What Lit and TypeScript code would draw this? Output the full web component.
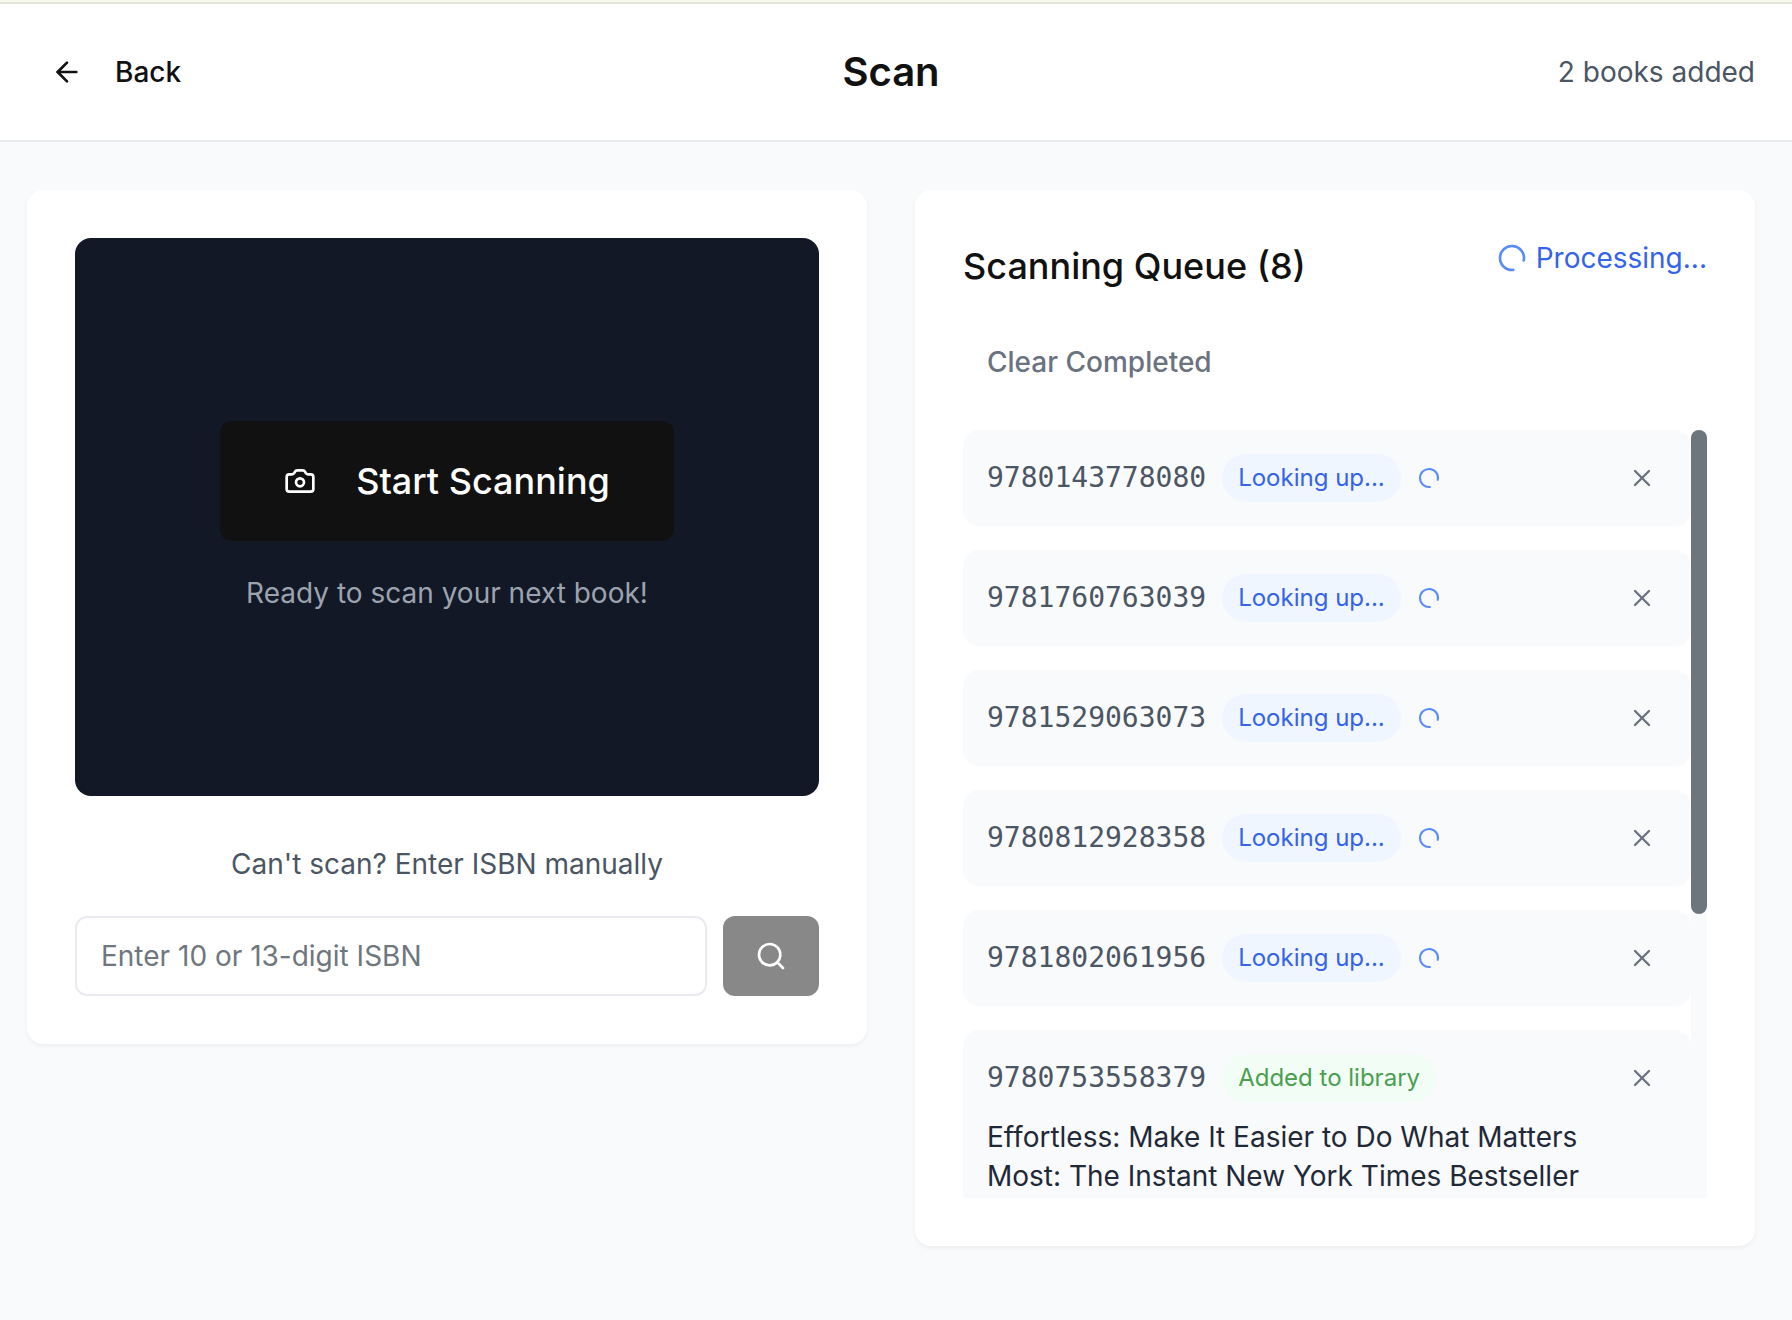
import { LitElement, html, css, svg, nothing } from "lit";
import { customElement, property, query, state } from "lit/decorators.js";
import { styleMap } from "lit/directives/style-map.js";

type Status = "looking" | "added" | "unloaded";

interface QueueItem {
  isbn: string;
  status: Status;
  title?: string;
}

const LABELS: Record<Status, string> = {
  looking: "Looking up...",
  added: "Added to library",
  unloaded: "",
};

const ICONS = {
  back: svg`<path d="m12 19-7-7 7-7"/><path d="M19 12H5"/>`,
  camera: svg`<path d="M13.997 4a2 2 0 0 1 1.76 1.05l.486.9A2 2 0 0 0 18.003 7H20a2 2 0 0 1 2 2v9a2 2 0 0 1-2 2H4a2 2 0 0 1-2-2V9a2 2 0 0 1 2-2h1.997a2 2 0 0 0 1.759-1.048l.489-.904A2 2 0 0 1 10.004 4z"/><circle cx="12" cy="13" r="3"/>`,
  search: svg`<circle cx="11" cy="11" r="8"/><path d="m21 21-4.3-4.3"/>`,
  close: svg`<path d="M18 6 6 18"/><path d="m6 6 12 12"/>`,
  spinner: svg`<path transform="rotate(84 12 12)" d="M21 12a9 9 0 1 1-6.219-8.56"/>`,
};

@customElement("ui-icon")
class UiIcon extends LitElement {
  static styles = css`
    :host {
      display: block;
      flex: none;
      width: 32px;
      height: 32px;
    }
    .glyph {
      display: block;
      width: 100%;
      height: 100%;
      fill: none;
      stroke: currentColor;
      stroke-width: 2;
      stroke-linecap: round;
      stroke-linejoin: round;
    }
  `;

  @property() name: keyof typeof ICONS = "close";

  render() {
    return html`<svg class="glyph" viewBox="0 0 24 24" aria-hidden="true">${ICONS[this.name]}</svg>`;
  }
}

@customElement("queue-row")
class QueueRow extends LitElement {
  static styles = css`
    :host {
      display: block;
      box-sizing: border-box;
      padding: 24px;
      border-radius: 16px;
      background: #f9fafc;
    }
    .line {
      display: flex;
      align-items: center;
      gap: 16px;
      height: 48px;
    }
    .isbn {
      font-family: "DejaVu Sans Mono", "Liberation Mono", monospace;
      font-size: 28px;
      color: #4b5563;
    }
    .badge {
      padding: 0 16px;
      border-radius: 24px;
      font-size: 24px;
      line-height: 48px;
      white-space: nowrap;
    }
    .looking {
      color: #3563e9;
      background: #eff6ff;
    }
    .added {
      color: #4aa050;
      background: #f2fdf5;
    }
    .spinner {
      width: 24px;
      height: 24px;
      color: #5a8cf6;
    }
    .remove {
      display: flex;
      align-items: center;
      justify-content: center;
      width: 50px;
      height: 48px;
      margin: 0 0 0 auto;
      padding: 0;
      border: 0;
      background: none;
      color: #6b7280;
      cursor: pointer;
    }
    .cross {
      width: 28px;
      height: 28px;
    }
    .title {
      margin: 16px 48px 0 0;
      font-size: 28px;
      line-height: 39px;
      color: #1f2937;
    }
    .blank {
      height: 142px;
    }
  `;

  @property({ attribute: false }) item!: QueueItem;

  private remove() {
    this.dispatchEvent(new CustomEvent("remove-item", { bubbles: true, composed: true }));
  }

  render() {
    const { isbn, status, title } = this.item;
    if (status === "unloaded") return html`<div class="blank"></div>`;
    return html`
      <div class="line">
        <span class="isbn">${isbn}</span>
        <span class="badge ${status}">${LABELS[status]}</span>
        ${status === "looking" ? html`<ui-icon class="spinner" name="spinner"></ui-icon>` : nothing}
        <button class="remove" type="button" aria-label="Remove" @click=${this.remove}>
          <ui-icon class="cross" name="close"></ui-icon>
        </button>
      </div>
      ${title ? html`<p class="title">${title}</p>` : nothing}
    `;
  }
}

@customElement("app-root")
class AppRoot extends LitElement {
  static styles = css`
    :host {
      display: block;
      box-sizing: border-box;
      min-height: 100vh;
      border-top: 2px solid #f9faee;
      background: #f9fafc;
      color: #111111;
      font-family: Inter, "Liberation Sans", sans-serif;
      font-size: 28px;
      line-height: 40px;
    }
    button,
    input {
      font: inherit;
    }
    button {
      cursor: pointer;
    }
    .header {
      display: grid;
      grid-template-columns: 1fr auto 1fr;
      align-items: center;
      padding: 32px 37px 32px 27px;
      border-top: 2px solid #e3e4da;
      border-bottom: 2px solid #e9ebee;
      background: #ffffff;
    }
    .back {
      display: flex;
      align-items: center;
      justify-self: start;
      gap: 32px;
      height: 72px;
      padding: 0 24px;
      border: 0;
      background: none;
      color: inherit;
      font-weight: 500;
    }
    .page-title {
      margin: 0;
      font-size: 40px;
      line-height: 56px;
      font-weight: 600;
    }
    .count {
      justify-self: end;
      color: #4b5563;
    }
    .main {
      display: grid;
      grid-template-columns: 1fr 1fr;
      align-items: start;
      gap: 48px;
      padding: 48px 37px 48px 27px;
    }
    .card {
      min-width: 0;
      padding: 48px;
      border-radius: 16px;
      background: #ffffff;
      box-shadow: 0 2px 4px rgba(0, 0, 0, 0.05);
    }
    .viewer {
      display: flex;
      flex-direction: column;
      align-items: center;
      justify-content: center;
      gap: 32px;
      aspect-ratio: 4 / 3;
      border-radius: 16px;
      background: #121826;
    }
    .start {
      display: flex;
      align-items: center;
      gap: 40px;
      height: 120px;
      padding: 0 64px;
      border: 0;
      border-radius: 12px;
      background: #111111;
      color: #ffffff;
      font-size: 36px;
      font-weight: 500;
    }
    .hint {
      margin: 0;
      color: #9ca3af;
    }
    .manual {
      display: grid;
      grid-template-columns: 1fr 96px;
      gap: 32px 16px;
      margin-top: 48px;
    }
    .manual-label {
      grid-column: 1 / -1;
      text-align: center;
      color: #4b5563;
    }
    .isbn-input {
      box-sizing: border-box;
      min-width: 0;
      width: 100%;
      height: 80px;
      padding: 0 24px;
      border: 2px solid #e9ebf0;
      border-radius: 12px;
      background: #ffffff;
      color: inherit;
      outline: none;
    }
    .isbn-input::placeholder {
      color: #6f767e;
      opacity: 1;
    }
    .search {
      display: flex;
      align-items: center;
      justify-content: center;
      padding: 0;
      border: 0;
      border-radius: 12px;
      background: #888888;
      color: #ffffff;
    }
    .queue-head {
      display: flex;
      align-items: flex-start;
      justify-content: space-between;
    }
    .queue-title {
      margin: 0;
      font-size: 36px;
      line-height: 56px;
      font-weight: 500;
    }
    .processing {
      display: flex;
      align-items: center;
      gap: 8px;
      color: #3563e9;
    }
    .processing-icon {
      color: #5a8cf6;
    }
    .clear {
      display: block;
      height: 72px;
      margin: 32px 0;
      padding: 0 24px;
      border: 0;
      background: none;
      color: #6b7280;
      font-weight: 500;
    }
    .scroll-area {
      display: grid;
      grid-template-columns: 1fr 16px;
    }
    .queue {
      display: flex;
      flex-direction: column;
      gap: 24px;
      max-height: 768px;
      margin: 0;
      padding: 0;
      overflow-y: auto;
      scrollbar-width: none;
      list-style: none;
    }
    .track {
      background: #f9fafc;
    }
    .thumb {
      border-radius: 8px;
      background: #6d757d;
    }
  `;

  @state() private items: QueueItem[] = [
    { isbn: "9780143778080", status: "looking" },
    { isbn: "9781760763039", status: "looking" },
    { isbn: "9781529063073", status: "looking" },
    { isbn: "9780812928358", status: "looking" },
    { isbn: "9781802061956", status: "looking" },
    {
      isbn: "9780753558379",
      status: "added",
      title: "Effortless: Make It Easier to Do What Matters Most: The Instant New York Times Bestseller",
    },
    { isbn: "", status: "unloaded" },
    { isbn: "", status: "unloaded" },
  ];

  @state() private thumbHeight = 0;
  @state() private thumbTop = 0;

  @query(".queue") private queue!: HTMLElement;

  private measure = () => {
    const { clientHeight, scrollHeight, scrollTop } = this.queue;
    const ratio = clientHeight / scrollHeight;
    this.thumbHeight = ratio < 1 ? Math.round(clientHeight * ratio) : 0;
    this.thumbTop = Math.round(scrollTop * ratio);
  };

  private observer = new ResizeObserver(this.measure);

  firstUpdated() {
    this.observer.observe(this.queue);
  }

  private removeItem(item: QueueItem) {
    this.items = this.items.filter((other) => other !== item);
  }

  private clearCompleted() {
    this.items = this.items.filter((item) => item.status === "looking");
  }

  render() {
    const thumb = { height: `${this.thumbHeight}px`, marginTop: `${this.thumbTop}px` };
    return html`
      <header class="header">
        <button class="back" type="button"><ui-icon name="back"></ui-icon>Back</button>
        <h1 class="page-title">Scan</h1>
        <span class="count">2 books added</span>
      </header>
      <main class="main">
        <section class="card">
          <div class="viewer">
            <button class="start" type="button"><ui-icon name="camera"></ui-icon>Start Scanning</button>
            <p class="hint">Ready to scan your next book!</p>
          </div>
          <form class="manual" @submit=${(e: Event) => e.preventDefault()}>
            <label class="manual-label" for="isbn">Can't scan? Enter ISBN manually</label>
            <input class="isbn-input" id="isbn" type="text" placeholder="Enter 10 or 13-digit ISBN" />
            <button class="search" type="submit" aria-label="Search"><ui-icon name="search"></ui-icon></button>
          </form>
        </section>
        <section class="card">
          <div class="queue-head">
            <h2 class="queue-title">Scanning Queue (${this.items.length})</h2>
            <div class="processing" role="status">
              <ui-icon class="processing-icon" name="spinner"></ui-icon>Processing...
            </div>
          </div>
          <button class="clear" type="button" @click=${this.clearCompleted}>Clear Completed</button>
          <div class="scroll-area">
            <ul class="queue" @scroll=${this.measure}>
              ${this.items.map(
                (item) => html`<li><queue-row .item=${item} @remove-item=${() => this.removeItem(item)}></queue-row></li>`
              )}
            </ul>
            <div class="track" aria-hidden="true"><div class="thumb" style=${styleMap(thumb)}></div></div>
          </div>
        </section>
      </main>
    `;
  }
}
